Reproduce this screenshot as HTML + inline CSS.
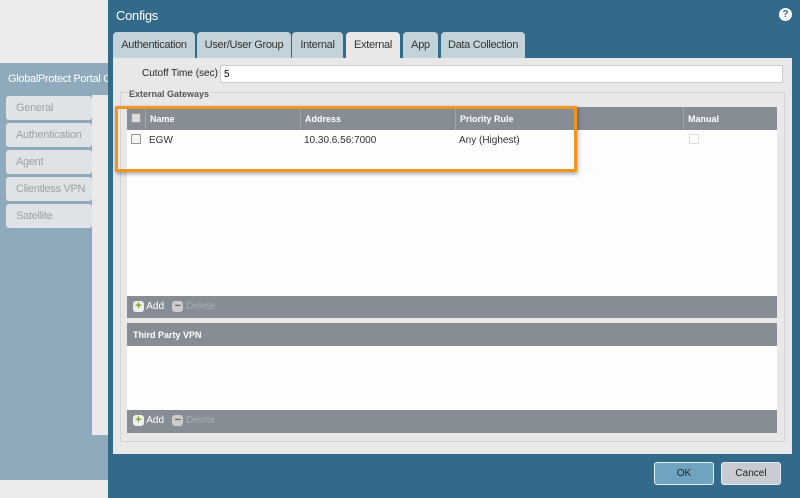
<!DOCTYPE html>
<html><head><style>
*{box-sizing:border-box;margin:0;padding:0}
body{width:800px;height:498px;overflow:hidden;background:#ececec;font-family:"Liberation Sans",sans-serif;position:relative;font-size:10px}
.a{position:absolute;white-space:nowrap}
.lt{position:absolute;left:6px;width:86px;height:24px;background:#dfe3e6;border-radius:3px;color:#9aa3aa;font-size:11px;padding:6px 0 0 10px;white-space:nowrap;overflow:hidden;letter-spacing:-0.3px}
.tab{position:absolute;top:32px;height:26px;background:#c4d2da;border-radius:4px 4px 0 0;color:#333;font-size:11px;text-align:center;padding-top:7px;white-space:nowrap;letter-spacing:-0.3px}
.th{position:absolute;top:0;height:23px;color:#fff;font-weight:bold;font-size:9px;padding:7px 0 0 4px;border-left:1px solid #a0a6ac}
.cb{position:absolute;width:10px;height:10px;border:1px solid #999;background:#f4f4f4}
.tb{position:absolute;left:127px;width:650px;height:22px;background:#868d94;color:#fff;font-size:10px;white-space:nowrap}
.ic{display:inline-block;width:11px;height:11px;border-radius:3px;vertical-align:middle;text-align:center;line-height:10px;font-weight:bold;font-size:11px}
</style></head><body>
<div class="a" style="left:0;top:63px;width:108px;height:417px;background:#8fabbb"></div>
<div class="a" style="left:8px;top:73px;color:#fff;font-size:11px;letter-spacing:-0.3px">GlobalProtect Portal C</div>
<div class="a" style="left:92px;top:95px;width:16px;height:340px;background:#eaeaea"></div>
<div class="lt" style="top:96px">General</div>
<div class="lt" style="top:123px">Authentication</div>
<div class="lt" style="top:150px">Agent</div>
<div class="lt" style="top:177px">Clientless VPN</div>
<div class="lt" style="top:204px">Satellite</div>

<div class="a" style="left:108px;top:0;width:692px;height:498px;background:#336a8a"></div>
<div class="a" style="left:116px;top:8px;color:#fff;font-size:13px;letter-spacing:-0.3px">Configs</div>
<div class="a" style="left:779px;top:8px;width:13px;height:13px;border-radius:50%;background:#fff;color:#336a8a;font-size:10px;font-weight:bold;text-align:center;line-height:13px">?</div>

<div class="tab" style="left:113px;width:82px">Authentication</div>
<div class="tab" style="left:197px;width:94px">User/User Group</div>
<div class="tab" style="left:292px;width:51px">Internal</div>
<div class="tab" style="left:346px;width:54px;background:#e8e8e8;height:27px">External</div>
<div class="tab" style="left:403px;width:35px">App</div>
<div class="tab" style="left:441px;width:84px">Data Collection</div>

<div class="a" style="left:113px;top:58px;width:679px;height:396px;background:#e8e8e8"></div>
<div class="a" style="left:142px;top:68px;font-size:10px;color:#222">Cutoff Time (sec)</div>
<div class="a" style="left:220px;top:65px;width:563px;height:18px;background:#fff;border:1px solid #ccc;padding:3px 3px;font-size:10px">5</div>
<div class="a" style="left:120px;top:92px;width:665px;height:350px;border:1px solid #d4d4d4"></div>
<div class="a" style="left:128px;top:89px;font-weight:bold;color:#555;font-size:9px;background:#e8e8e8;padding:0 1px">External Gateways</div>

<div class="a" style="left:127px;top:107px;width:650px;height:189px;background:#fdfdfd">
 <div class="a" style="left:0;top:0;width:650px;height:23px;background:#868d94"></div>
 <div class="cb" style="left:4px;top:6px;background:#ddd"></div>
 <div class="th" style="left:18px;width:155px">Name</div>
 <div class="th" style="left:173px;width:155px">Address</div>
 <div class="th" style="left:328px;width:228px">Priority Rule</div>
 <div class="th" style="left:556px;width:94px">Manual</div>
 <div class="cb" style="left:4px;top:27px"></div>
 <div class="a" style="left:22px;top:28px;color:#333">EGW</div>
 <div class="a" style="left:177px;top:28px;color:#333">10.30.6.56:7000</div>
 <div class="a" style="left:332px;top:28px;color:#333">Any (Highest)</div>
 <div class="cb" style="left:562px;top:27px;border-color:#ddd;background:#fff"></div>
</div>
<div class="tb" style="top:296px;padding:5px 6px"><span class="ic" style="background:#eee;color:#7a9a20">+</span> Add &nbsp; <span class="ic" style="background:#ccc;color:#666">−</span> <span style="color:#a8aeb3">Delete</span></div>

<div class="tb" style="top:323px;font-weight:bold;font-size:9px;padding:7px 6px;height:23px">Third Party VPN</div>
<div class="a" style="left:127px;top:346px;width:650px;height:64px;background:#fdfdfd"></div>
<div class="tb" style="top:410px;padding:5px 6px;height:23px"><span class="ic" style="background:#eee;color:#7a9a20">+</span> Add &nbsp; <span class="ic" style="background:#ccc;color:#666">−</span> <span style="color:#a8aeb3">Delete</span></div>

<div class="a" style="left:115px;top:106px;width:462px;height:66px;border:3px solid #f0961e;box-shadow:1px 2px 4px rgba(0,0,0,.35)"></div>

<div class="a" style="left:654px;top:462px;width:60px;height:23px;background:#6fa3c0;border:1px solid #e6eef2;border-radius:3px;text-align:center;padding-top:5px;color:#222">OK</div>
<div class="a" style="left:721px;top:462px;width:60px;height:23px;background:#c8ccd2;border:1px solid #e6eef2;border-radius:3px;text-align:center;padding-top:5px;color:#222">Cancel</div>
</body></html>
